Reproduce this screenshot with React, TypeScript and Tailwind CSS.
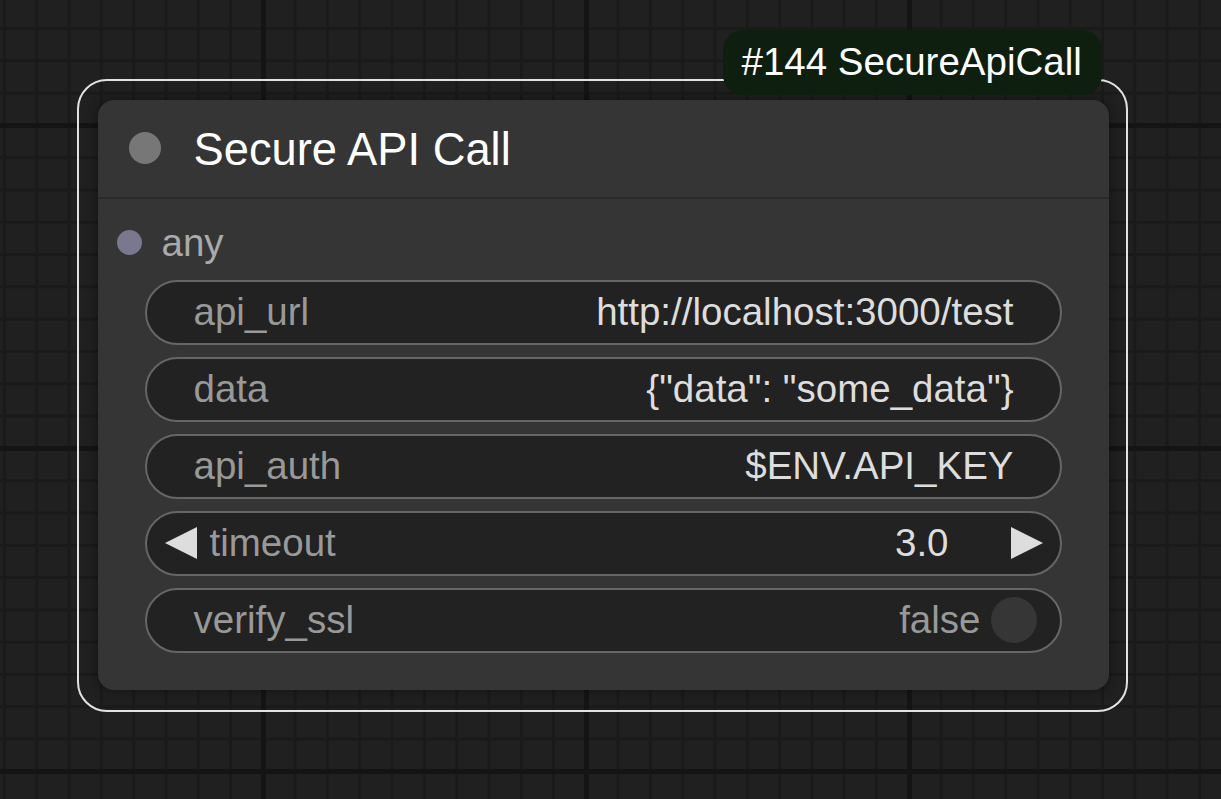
const font = "font-['Liberation_Sans',Arial,sans-serif]"

function Field({ label, value }: { label: string; value: string }) {
  return (
    <div className="flex h-[65px] items-center justify-between rounded-full border-2 border-[#666] bg-[#222] pl-[47px] pr-[46px] text-[38.5px]">
      <span className="text-[#999]">{label}</span>
      <span className="text-[#ddd]">{value}</span>
    </div>
  )
}

function NumberField({ label, value }: { label: string; value: string }) {
  return (
    <div className="flex h-[65px] items-center rounded-full border-2 border-[#666] bg-[#222] pl-[18px] pr-[17px] text-[38.5px]">
      <svg width="32" height="32" viewBox="0 0 32 32" className="shrink-0">
        <path d="M0 16 L32 0 L32 32 Z" fill="#ddd" />
      </svg>
      <span className="ml-[13px] text-[#999]">{label}</span>
      <span className="ml-auto text-[#ddd]">{value}</span>
      <svg width="32" height="32" viewBox="0 0 32 32" className="ml-[62px] shrink-0">
        <path d="M32 16 L0 0 L0 32 Z" fill="#ddd" />
      </svg>
    </div>
  )
}

function ToggleField({ label, value }: { label: string; value: string }) {
  return (
    <div className="flex h-[65px] items-center rounded-full border-2 border-[#666] bg-[#222] pl-[47px] pr-[23px] text-[38.5px]">
      <span className="text-[#999]">{label}</span>
      <span className="ml-auto text-[#999]">{value}</span>
      <span className="ml-[10px] h-[46px] w-[46px] rounded-full bg-[#363636]" />
    </div>
  )
}

export default function App() {
  return (
    <div
      className={`${font} h-[799px] w-full overflow-hidden pt-[79px] pl-[77px] [background-color:#202020] [background-image:linear-gradient(to_right,#141414_5px,transparent_5px),linear-gradient(to_bottom,#141414_5px,transparent_5px),linear-gradient(to_right,#1a1a1a_3px,transparent_3px),linear-gradient(to_bottom,#1a1a1a_3px,transparent_3px)] [background-size:323px_323px,323px_323px,32.3px_32.3px,32.3px_32.3px] [background-position:261px_123px,261px_123px,3px_27px,3px_27px]`}
    >
      <div className="relative h-[633px] w-[1051px] rounded-[30px] border-[2.5px] border-[#e2e2e2] pt-[18.5px] pl-[18.5px]">
        {/* id badge */}
        <div className="absolute left-[643.5px] top-[-51.5px] flex h-[65px] w-[379px] items-center rounded-[20px] bg-[#0e1e0f] pl-[19px] text-[38.5px] text-white">
          #144 SecureApiCall
        </div>

        <div className="h-[590px] w-[1011px] rounded-[16px] bg-[#353535] shadow-[0_0_12px_rgba(0,0,0,0.45)]">
          <div className="flex h-[99px] items-center border-b-2 border-[#2b2b2b] pl-[31px]">
            <span className="h-[32px] w-[32px] rounded-full bg-[#777]" />
            <span className="ml-[33px] mt-[4px] text-[45.3px] text-white">Secure API Call</span>
          </div>

          <div className="mt-[12px] flex h-[64px] items-center pl-[19px]">
            <span className="h-[25px] w-[25px] rounded-full bg-[#7a788f]" />
            <span className="ml-[20px] text-[38.5px] text-[#aaa]">any</span>
          </div>

          <div className="mx-[47px] mt-[5px] flex flex-col gap-[12px]">
            <Field label="api_url" value="http://localhost:3000/test" />
            <Field label="data" value={'{"data": "some_data"}'} />
            <Field label="api_auth" value="$ENV.API_KEY" />
            <NumberField label="timeout" value="3.0" />
            <ToggleField label="verify_ssl" value="false" />
          </div>
        </div>
      </div>
    </div>
  )
}
